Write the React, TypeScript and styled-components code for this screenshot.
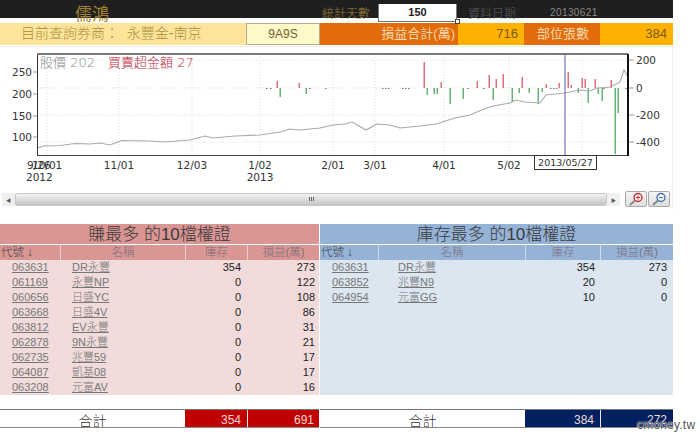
import styled, { createGlobalStyle } from "styled-components";

const CJK = `"Liberation Sans", "Noto Sans CJK TC", sans-serif`;

const GlobalStyle = createGlobalStyle`
  html, body { margin: 0; padding: 0; background: #fff; }
  body { font-family: ${CJK}; width: 700px; height: 434px; overflow: hidden; }
`;

const Page = styled.div`
  position: relative;
  width: 673px;
  height: 434px;
`;

const TopBar = styled.div`
  display: grid;
  grid-template-columns: 322px 56px 79px 11px 82px 1fr;
  height: 18px;
  align-items: center;
  background: #1f1f1f;
`;

const StockName = styled.div`
  padding-left: 75px;
  font-size: 17px;
  color: #a08230;
`;

const BarLabel = styled.div<{ $dim?: boolean }>`
  font-size: 12px;
  font-weight: 300;
  color: ${(p) => (p.$dim ? "#5c5c5c" : "#9a8035")};
`;

const DaysInput = styled.div`
  position: relative;
  height: 18px;
  box-sizing: border-box;
  border: 1px solid #777;
  border-top: none;
  background: #fff;
  font-size: 11px;
  font-weight: 700;
  line-height: 17px;
  text-align: center;
  color: #222;
`;

const ResizeHandle = styled.span`
  position: absolute;
  right: -4px;
  bottom: -3px;
  width: 3px;
  height: 3px;
  border: 1px solid #444;
  background: #fff;
`;

const DateValue = styled.div`
  font-size: 10px;
  letter-spacing: 0.4px;
  color: #8a8a8a;
`;

const Summary = styled.div`
  display: grid;
  grid-template-columns: 246px 74px 138px 66px 76px 1fr;
  height: 21px;
  margin-top: 5px;
  align-items: stretch;
`;

const BrokerCell = styled.div`
  background: #fde49a;
  padding-left: 21px;
  font-size: 14px;
  font-weight: 300;
  line-height: 21px;
  color: #a88f3c;
  white-space: pre;
`;

const CodeCell = styled.div`
  box-sizing: border-box;
  border: 1px solid #b5ad8e;
  background: #fff8c8;
  font-size: 12px;
  line-height: 20px;
  text-align: center;
  color: #6f6231;
`;

const OrangeCell = styled.div<{ $pad: number }>`
  background: #e36c0a;
  padding-right: ${(p) => p.$pad}px;
  font-size: 13px;
  line-height: 21px;
  text-align: right;
  color: #f7d8b0;
`;

const YellowCell = styled.div`
  background: #ffb100;
  padding-right: 6px;
  font-size: 13px;
  line-height: 21px;
  text-align: right;
  color: #7a5a10;
`;

const ChartPanel = styled.div`
  margin-top: 2px;
  height: 162px;
  border-top: 1px solid #eee;
  border-right: 1px solid #eee;
`;

const ChartSvg = styled.svg`
  display: block;
  width: 672px;
  height: 143px;
`;

const AxisText = styled.text`
  font-family: "DejaVu Sans", sans-serif;
  font-size: 10.5px;
  fill: #333;
`;

const Legend = styled.text<{ $color: string }>`
  font-family: "DejaVu Sans", "Noto Sans CJK TC", sans-serif;
  font-size: 13px;
  font-weight: 300;
  fill: ${(p) => p.$color};
`;

const ScrollRow = styled.div`
  display: flex;
  align-items: center;
  height: 18px;
  padding-left: 2px;
`;

const ArrowBox = styled.div`
  display: flex;
  align-items: center;
  justify-content: center;
  width: 13px;
  height: 13px;
  background: #f0f0f0;
  font-size: 5px;
  color: #555;
`;

const ScrollThumb = styled.div`
  flex: none;
  display: flex;
  align-items: center;
  justify-content: center;
  width: 592px;
  height: 13px;
  box-sizing: border-box;
  border: 1px solid #c8c8c8;
  border-radius: 2px;
  background: linear-gradient(#f2f2f2, #dcdcdc 50%, #c4c4c4);
`;

const ThumbGrip = styled.span`
  width: 5px;
  height: 4px;
  background: repeating-linear-gradient(90deg, #666 0 1px, transparent 1px 2px);
`;

const ZoomButton = styled.div`
  flex: none;
  display: flex;
  width: 22px;
  height: 16px;
  box-sizing: border-box;
  border: 1px solid #aaa;
  border-radius: 2px;
  background: linear-gradient(#f6f6f6, #dedede);
`;

const ZoomGroup = styled.div`
  display: flex;
  gap: 1px;
  margin-left: 5px;
`;

const Tables = styled.div`
  display: grid;
  grid-template-columns: 319px 353px;
  gap: 1px;
  margin-top: 15px;
`;

const TableWrap = styled.div`
  display: flex;
  flex-direction: column;
`;

const TableTitle = styled.div<{ $bg: string }>`
  height: 20px;
  background: ${(p) => p.$bg};
  font-size: 17px;
  font-weight: 300;
  line-height: 21px;
  text-align: center;
  color: #3a3a3a;
`;

const HeaderRow = styled.div<{ $bg: string; $cols: string }>`
  display: grid;
  grid-template-columns: ${(p) => p.$cols};
  height: 15px;
  margin-top: 1px;
  background: ${(p) => p.$bg};
  font-size: 11.5px;
  font-weight: 300;
  line-height: 15px;
`;

const HeaderCell = styled.div<{ $first?: boolean }>`
  box-sizing: border-box;
  border-left: ${(p) => (p.$first ? "none" : "1px solid rgba(255,255,255,0.55)")};
  padding-left: ${(p) => (p.$first ? "1px" : "0")};
  text-align: ${(p) => (p.$first ? "left" : "center")};
  color: ${(p) => (p.$first ? "#444" : "#7c6f78")};
`;

const Body = styled.div<{ $bg: string }>`
  height: 135px;
  background: ${(p) => p.$bg};
`;

const Row = styled.div<{ $cols: string }>`
  display: grid;
  grid-template-columns: ${(p) => p.$cols};
  height: 15px;
  align-items: center;
  font-size: 11px;
  line-height: 15px;
`;

const LinkCell = styled.span<{ $indent: number }>`
  padding-left: ${(p) => p.$indent}px;
  color: #777;
  text-decoration: underline;
  font-weight: 300;
`;

const NumCell = styled.span<{ $pad: number }>`
  padding-right: ${(p) => p.$pad}px;
  text-align: right;
  color: #222;
`;

const Totals = styled.div<{ $cols: string }>`
  display: grid;
  grid-template-columns: ${(p) => p.$cols};
  height: 19px;
  margin-top: 14px;
  box-sizing: border-box;
  border-top: 1px solid #777;
  border-bottom: 1px solid #888;
  overflow: hidden;
`;

const TotalLabel = styled.div`
  font-size: 14px;
  font-weight: 300;
  line-height: 23px;
  text-align: center;
  color: #333;
`;

const TotalValue = styled.div<{ $bg: string; $divider?: boolean; $pad: number }>`
  background: ${(p) => p.$bg};
  border-left: ${(p) => (p.$divider ? "1px solid #e8e8e8" : "none")};
  padding-right: ${(p) => p.$pad}px;
  font-size: 12px;
  line-height: 21px;
  text-align: right;
  color: #f0d8d8;
`;

const Watermark = styled.div`
  position: absolute;
  left: 637px;
  top: 418px;
  font-size: 12px;
  line-height: 14px;
  letter-spacing: 0.2px;
  color: #555;
  text-shadow: 0 0 1px #fff, 0 0 2px #fff;
`;

const pricePoints =
  "37,148 44,146 60,145.5 75,143.5 90,144 100,143 110,145 122,140.5 150,141 165,142 190,140 205,136 213,138 235,136 260,135 280,132 290,129 300,130 320,128 333,125 345,124 352,122 366,130 377,124 390,125 400,128 420,126 436,124 455,118 470,115 484,109 493,106 510,103 516,100 525,102 540,103 546,95 565,93 580,90 590,91 597,88 610,87 620,82 624,70 628,77";

const redBars: [number, number][] = [
  [277, 81], [299, 83], [424, 62], [441, 82], [477, 81], [489, 75], [496, 79], [503, 74], [522, 77],
  [546, 84], [559, 83], [568, 72], [571, 85], [582, 78], [585, 79], [595, 79], [611, 80],
];

const greenBars: [number, number][] = [
  [280, 97], [306, 94], [427, 95], [434, 94], [437, 94], [450, 104], [463, 99], [493, 100], [512, 102],
  [519, 93], [529, 93], [538, 104], [542, 92], [578, 93], [588, 103], [598, 94], [602, 101], [615, 154], [618, 113],
];

const tinyBars = [266, 270, 309, 325, 382, 385, 388, 402, 405, 408, 467, 483, 550, 553, 556, 603, 625];

const gridX = [47, 119, 192, 260, 333, 375, 444, 509, 582];
const gridY = [60, 88, 115, 142];

const dateLabels: [string, number][] = [
  ["11/01", 119], ["12/03", 192], ["1/02", 260], ["2/01", 333], ["3/01", 375], ["4/01", 444], ["5/02", 509],
];

function Chart() {
  return (
    <ChartSvg viewBox="0 47 672 143">
      <rect x="37" y="54" width="591" height="101" fill="#fff" />
      {gridX.map((x) => (
        <line key={x} x1={x} x2={x} y1="54" y2="155" stroke="#ddd" strokeDasharray="1 2" />
      ))}
      {gridY.map((y) => (
        <line key={y} x1="37" x2="628" y1={y} y2={y} stroke="#ddd" strokeDasharray="1 2" />
      ))}
      {redBars.map(([x, y]) => (
        <rect key={x} x={x - 0.5} y={y} width="1.5" height={88 - y} fill="#d9707c" />
      ))}
      {greenBars.map(([x, y]) => (
        <rect key={x} x={x - 0.5} y="88" width="1.5" height={y - 88} fill="#67b377" />
      ))}
      {tinyBars.map((x) => (
        <rect key={x} x={x} y="88" width="1.5" height="1" fill="#777" />
      ))}
      <polyline points={pricePoints} fill="none" stroke="#aaa" strokeWidth="1.1" />
      <line x1="565" x2="565" y1="54" y2="155" stroke="#5a55b8" />
      <line x1="37.5" x2="37.5" y1="54" y2="155" stroke="#333" />
      <line x1="37" x2="628" y1="54" y2="54" stroke="#777" strokeWidth="2" />
      <line x1="37" x2="628" y1="155.5" y2="155.5" stroke="#444" />
      <line x1="628" x2="628" y1="54" y2="156" stroke="#111" strokeWidth="2" />

      {[[72, "250"], [94, "200"], [116, "150"], [137, "100"]].map(([y, t]) => (
        <g key={t}>
          <line x1="33" x2="37" y1={y} y2={y} stroke="#999" />
          <AxisText x="12" y={Number(y) + 4}>{t}</AxisText>
        </g>
      ))}
      {[[60, "200"], [88, "0"], [115, "-200"], [142, "-400"]].map(([y, t]) => (
        <g key={t}>
          <line x1="629" x2="634" y1={y} y2={y} stroke="#999" />
          <AxisText x="636" y={Number(y) + 4}>{t}</AxisText>
        </g>
      ))}

      <Legend x="40" y="67" $color="#8c8c8c">股價 202</Legend>
      <Legend x="108" y="67" $color="#c0283c">買賣超金額 27</Legend>

      <AxisText x="27" y="169">9/26</AxisText>
      <AxisText x="32" y="169">10/01</AxisText>
      <AxisText x="26" y="181">2012</AxisText>
      <AxisText x="260" y="181" textAnchor="middle">2013</AxisText>
      {dateLabels.map(([t, x]) => (
        <AxisText key={t} x={x} y="169" textAnchor="middle">{t}</AxisText>
      ))}

      <rect x="534.5" y="155.5" width="62" height="14" fill="#fff" stroke="#333" />
      <AxisText x="565.5" y="166" textAnchor="middle" style={{ fontSize: 9.5 }}>2013/05/27</AxisText>
    </ChartSvg>
  );
}

function ZoomIcon({ color, plus }: { color: string; plus?: boolean }) {
  return (
    <svg width="20" height="14" viewBox="0 0 20 14">
      <line x1="4" y1="13" x2="9" y2="8.5" stroke="#8a8a8a" strokeWidth="2" />
      <circle cx="12" cy="5.5" r="4" fill="#f4f4f4" stroke={color} strokeWidth="1.4" />
      <line x1="10" x2="14" y1="5.5" y2="5.5" stroke={color} />
      {plus && <line x1="12" x2="12" y1="3.5" y2="7.5" stroke={color} />}
    </svg>
  );
}

type Item = { code: string; name: string; stock: number; pnl: number };

const topProfit: Item[] = [
  { code: "063631", name: "DR永豐", stock: 354, pnl: 273 },
  { code: "061169", name: "永豐NP", stock: 0, pnl: 122 },
  { code: "060656", name: "日盛YC", stock: 0, pnl: 108 },
  { code: "063668", name: "日盛4V", stock: 0, pnl: 86 },
  { code: "063812", name: "EV永豐", stock: 0, pnl: 31 },
  { code: "062878", name: "9N永豐", stock: 0, pnl: 21 },
  { code: "062735", name: "兆豐59", stock: 0, pnl: 17 },
  { code: "064087", name: "凱基08", stock: 0, pnl: 17 },
  { code: "063208", name: "元富AV", stock: 0, pnl: 16 },
];

const topStock: Item[] = [
  { code: "063631", name: "DR永豐", stock: 354, pnl: 273 },
  { code: "063852", name: "兆豐N9", stock: 20, pnl: 0 },
  { code: "064954", name: "元富GG", stock: 10, pnl: 0 },
];

const leftCols = "60px 125px 62px 72px";
const rightCols = "58px 147px 75px 73px";

function RankTable(props: {
  title: string;
  cols: string;
  headBg: string;
  bodyBg: string;
  items: Item[];
  codeIndent: number;
  nameIndent: number;
  stockPad: number;
  pnlPad: number;
}) {
  return (
    <TableWrap>
      <TableTitle $bg={props.headBg}>{props.title}</TableTitle>
      <HeaderRow $bg={props.headBg} $cols={props.cols}>
        <HeaderCell $first>代號 ↓</HeaderCell>
        <HeaderCell>名稱</HeaderCell>
        <HeaderCell>庫存</HeaderCell>
        <HeaderCell>損益(萬)</HeaderCell>
      </HeaderRow>
      <Body $bg={props.bodyBg}>
        {props.items.map((it) => (
          <Row key={it.code} $cols={props.cols}>
            <LinkCell $indent={props.codeIndent}>{it.code}</LinkCell>
            <LinkCell $indent={props.nameIndent}>{it.name}</LinkCell>
            <NumCell $pad={props.stockPad}>{it.stock}</NumCell>
            <NumCell $pad={props.pnlPad}>{it.pnl}</NumCell>
          </Row>
        ))}
      </Body>
    </TableWrap>
  );
}

export default function App() {
  return (
    <Page>
      <GlobalStyle />
      <TopBar>
        <StockName>儒鴻</StockName>
        <BarLabel>統計天數</BarLabel>
        <DaysInput>
          150
          <ResizeHandle />
        </DaysInput>
        <span />
        <BarLabel $dim>資料日期</BarLabel>
        <DateValue>20130621</DateValue>
      </TopBar>

      <Summary>
        <BrokerCell>{"目前查詢券商：  永豐金-南京"}</BrokerCell>
        <CodeCell>9A9S</CodeCell>
        <OrangeCell $pad={3}>損益合計(萬)</OrangeCell>
        <YellowCell>716</YellowCell>
        <OrangeCell $pad={11}>部位張數</OrangeCell>
        <YellowCell>384</YellowCell>
      </Summary>

      <ChartPanel>
        <Chart />
        <ScrollRow>
          <ArrowBox>◀</ArrowBox>
          <ScrollThumb>
            <ThumbGrip />
          </ScrollThumb>
          <ArrowBox>▶</ArrowBox>
          <ZoomGroup>
            <ZoomButton>
              <ZoomIcon color="#d03030" plus />
            </ZoomButton>
            <ZoomButton>
              <ZoomIcon color="#4a70b0" />
            </ZoomButton>
          </ZoomGroup>
        </ScrollRow>
      </ChartPanel>

      <Tables>
        <div>
          <RankTable
            title="賺最多 的10檔權證"
            cols={leftCols}
            headBg="#d99694"
            bodyBg="#f2dcdb"
            items={topProfit}
            codeIndent={12}
            nameIndent={12}
            stockPad={6}
            pnlPad={4}
          />
          <Totals $cols="185px 62px 72px">
            <TotalLabel>合計</TotalLabel>
            <TotalValue $bg="#c00000" $pad={6}>354</TotalValue>
            <TotalValue $bg="#c00000" $divider $pad={5}>691</TotalValue>
          </Totals>
        </div>
        <div>
          <RankTable
            title="庫存最多 的10檔權證"
            cols={rightCols}
            headBg="#95b3d7"
            bodyBg="#dce6f1"
            items={topStock}
            codeIndent={12}
            nameIndent={20}
            stockPad={5}
            pnlPad={6}
          />
          <Totals $cols="205px 75px 73px">
            <TotalLabel>合計</TotalLabel>
            <TotalValue $bg="#002060" $pad={6}>384</TotalValue>
            <TotalValue $bg="#002060" $divider $pad={6}>272</TotalValue>
          </Totals>
        </div>
      </Tables>
      <Watermark>cmoney.tw</Watermark>
    </Page>
  );
}
